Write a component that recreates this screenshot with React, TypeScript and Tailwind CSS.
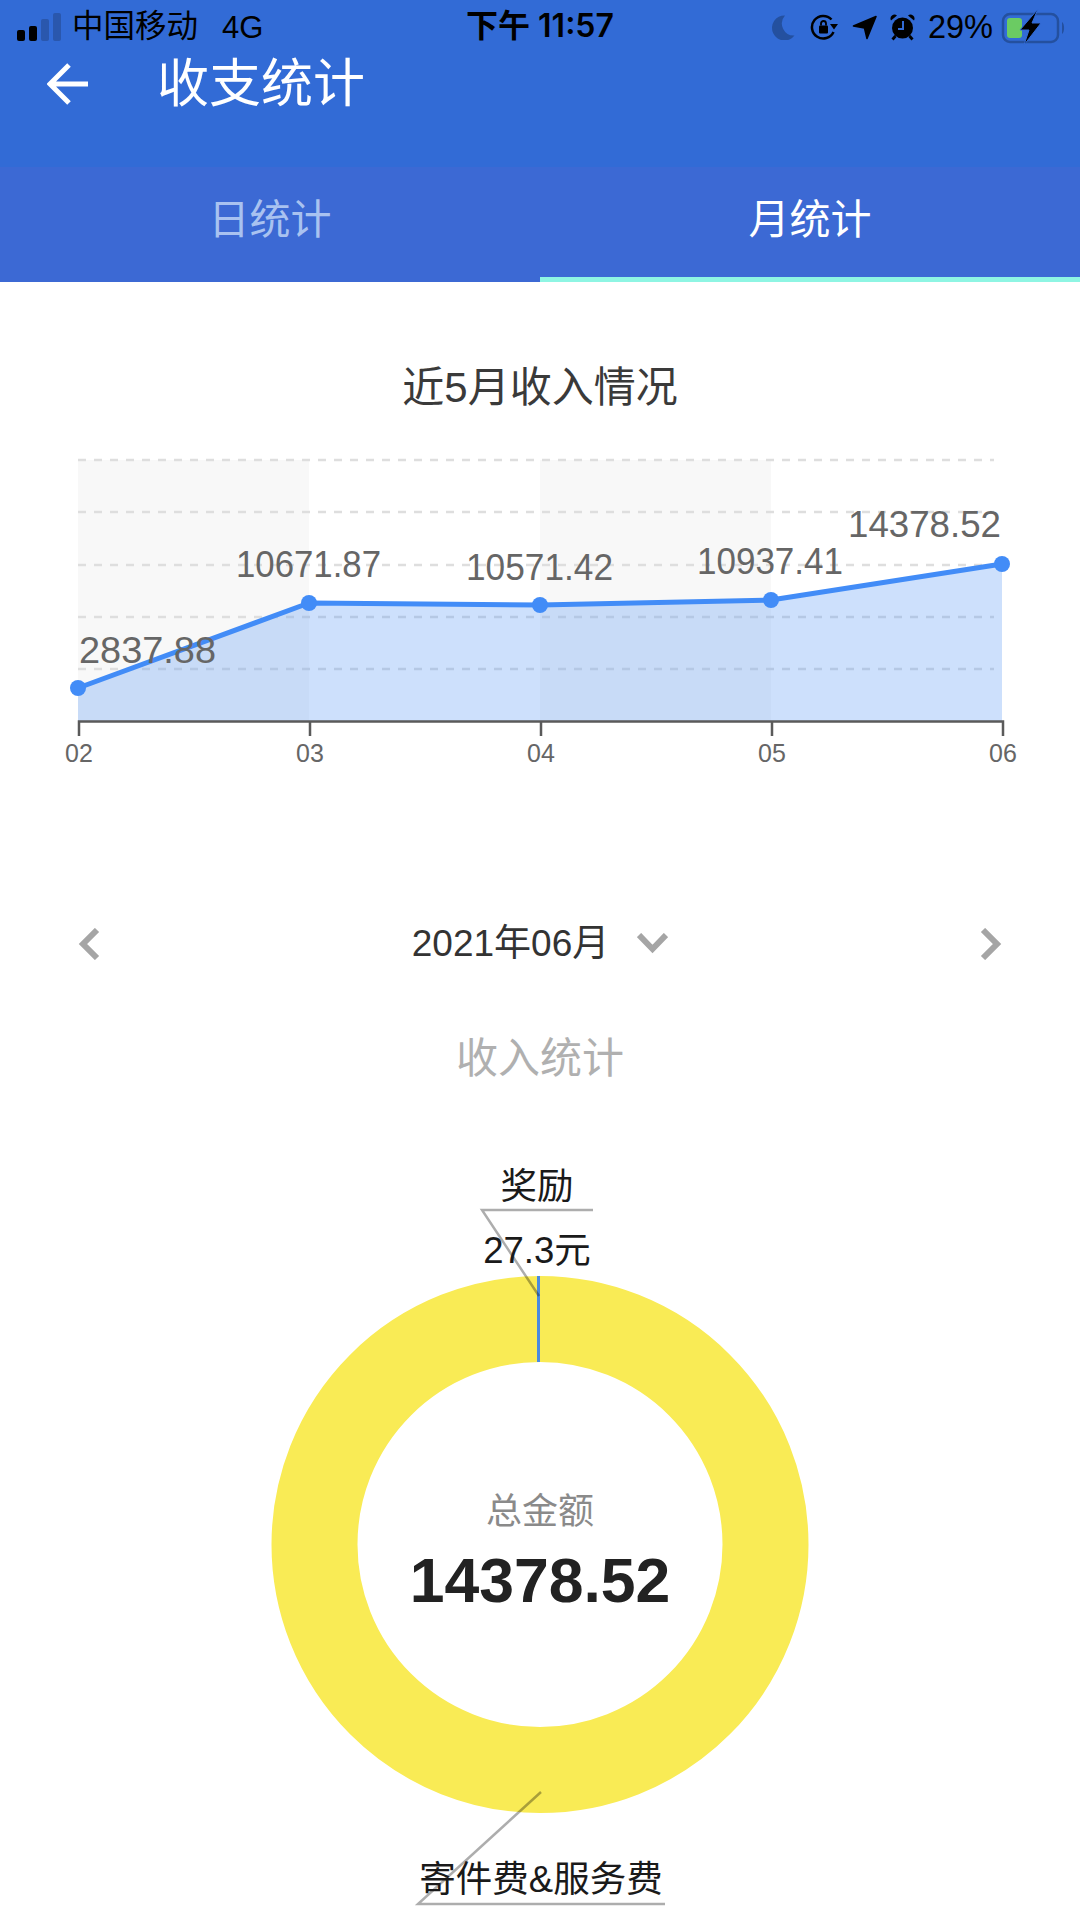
const FONT = "font-['Liberation_Sans','Noto_Sans_CJK_SC',sans-serif]";
const SVG_FONT = "'Liberation Sans','Noto Sans CJK SC',sans-serif";

const pts: [number, number][] = [[78, 248], [309, 163], [540, 165], [771, 160], [1002, 124]];
const ys = [20, 72, 125, 177, 229];
const values: { t: string; x: number; y: number; w: number }[] = [
  { t: "2837.88", x: 79, y: 223, w: 137 },
  { t: "10671.87", x: 236, y: 137, w: 145 },
  { t: "10571.42", x: 466, y: 140, w: 147 },
  { t: "10937.41", x: 697, y: 134, w: 146 },
  { t: "14378.52", x: 848, y: 97, w: 153 },
];

function LineChart() {
  const line = pts.map((p) => p.join(",")).join(" ");
  return (
    <svg width="1080" height="340" viewBox="0 0 1080 340" className="block" style={{ fontFamily: SVG_FONT }}>
      <rect x="78" y="20" width="231" height="261" fill="#f8f8f8" />
      <rect x="540" y="20" width="231" height="261" fill="#f8f8f8" />
      {ys.map((y) => (
        <line key={y} x1="78" x2="994" y1={y} y2={y} stroke="#dedede" strokeWidth="2.5" strokeDasharray="8 8" />
      ))}
      <polygon points={`78,281 ${line} 1002,281`} fill="#4a90f5" fillOpacity="0.28" />
      <polyline points={line} fill="none" stroke="#428cf7" strokeWidth="5" strokeLinejoin="round" />
      {pts.map((p) => (
        <circle key={p[0]} cx={p[0]} cy={p[1]} r="8" fill="#428cf7" />
      ))}
      <path d="M79 296V281.5H1003V296M310 281.5V296M541 281.5V296M772 281.5V296" fill="none" stroke="#5a5a5a" strokeWidth="2.5" />
      {values.map((v) => (
        <text key={v.t} x={v.x} y={v.y} fontSize="36" fill="#666666" textLength={v.w} lengthAdjust="spacingAndGlyphs">
          {v.t}
        </text>
      ))}
      {["02", "03", "04", "05", "06"].map((t, i) => (
        <text key={t} x={79 + i * 231} y="322" fontSize="25" fill="#666666" textAnchor="middle">
          {t}
        </text>
      ))}
    </svg>
  );
}

function Donut() {
  // svg origin sits at page y=1140
  const cx = 540, cy = 404.5, R = 225.5;
  return (
    <svg width="1080" height="780" viewBox="0 0 1080 780" className="block" style={{ fontFamily: SVG_FONT }}>
      <circle cx={cx} cy={cy} r={R} fill="none" stroke="#f9eb55" strokeWidth="86" />
      <rect x="537" y="136" width="3" height="86" fill="#4a8ae0" />
      <text x="537" y="59" fontSize="36.5" fill="#1a1a1a" textAnchor="middle">奖励</text>
      <path d="M539 156L482 70H593" fill="none" stroke="#000000" strokeOpacity="0.32" strokeWidth="2.5" />
      <text x="537" y="123" fontSize="36.5" fill="#1a1a1a" textAnchor="middle">27.3元</text>
      <path d="M541 652L418 764H665" fill="none" stroke="#000000" strokeOpacity="0.32" strokeWidth="2.5" />
      <text x="541" y="752" fontSize="36.5" fill="#1a1a1a" textAnchor="middle">寄件费&amp;服务费</text>
    </svg>
  );
}

function StatusIcons() {
  return (
    <div className="flex items-center">
      <svg width="25" height="26" viewBox="0 0 25 26">
        <path d="M15 1.5a12.5 12.5 0 1 0 9.5 20A12 12 0 0 1 15 1.5Z" fill="#24509f" />
      </svg>
      <svg width="28" height="28" viewBox="0 0 28 28" className="ml-[15px]">
        <path d="M21.5 6.5A11.3 11.3 0 1 0 23.5 19" fill="none" stroke="#000" strokeWidth="2.5" />
        <path d="M20 11h8l-4 5.5Z" fill="#000" />
        <rect x="9" y="12.5" width="9" height="8" rx="1" fill="#000" />
        <path d="M11 12.5V10.5a2.5 2.5 0 0 1 5 0v2" fill="none" stroke="#000" strokeWidth="1.8" />
      </svg>
      <svg width="25" height="25" viewBox="0 0 25 25" className="ml-[14px]">
        <path d="M24 1.5L15 23.5l-2.5-10.5L1.5 11Z" fill="#000" stroke="#000" strokeWidth="1.6" strokeLinejoin="round" />
      </svg>
      <svg width="25" height="28" viewBox="0 0 25 28" className="ml-[13px]">
        <circle cx="12.5" cy="15" r="10.5" fill="#000" />
        <path d="M1 7.5a4 4 0 0 1 6-5ZM24 7.5a4 4 0 0 0-6-5Z" fill="#000" />
        <path d="M5.5 23l-3 3.5M19.5 23l3 3.5" stroke="#000" strokeWidth="2.8" />
        <path d="M13 8v8H8" fill="none" stroke="#326bd6" strokeWidth="2" />
      </svg>
      <span className="ml-[13px] text-[32.5px] leading-none text-black">29%</span>
      <svg width="65" height="36" viewBox="0 0 65 36" className="ml-[8px]">
        <rect x="2" y="5" width="55" height="28" rx="7" fill="none" stroke="#24509f" strokeWidth="2.5" />
        <rect x="6" y="9" width="15" height="20" rx="3" fill="#6bcb63" />
        <path d="M61 13c2.5 1 3 10 0 12Z" fill="#24509f" />
        <path d="M37 0L19 21h9l-5 15 17-22h-9l6-14Z" fill="#000" stroke="#326bd6" strokeWidth="1" />
      </svg>
    </div>
  );
}

export default function App() {
  return (
    <div className={`w-[1080px] h-[1920px] overflow-hidden bg-white ${FONT}`}>
      <header className="h-[167px] bg-[#326bd6]">
        <div className="relative flex h-[54px] items-center justify-between pl-[17px] pr-[14px] text-black">
          <div className="flex items-center">
            <div className="flex h-[28px] items-end gap-[4px]">
              <span className="h-[11px] w-[8px] rounded-[2px] bg-black" />
              <span className="h-[15px] w-[8px] rounded-[2px] bg-black" />
              <span className="h-[22px] w-[8px] rounded-[2px] bg-[#2a57ad]" />
              <span className="h-[28px] w-[8px] rounded-[2px] bg-[#2a57ad]" />
            </div>
            <span className="ml-[11px] text-[31.5px] leading-none">中国移动</span>
            <span className="ml-[24px] text-[31px] leading-none">4G</span>
          </div>
          <span className="absolute left-[466px] top-[9px] font-['Inter','Noto_Sans_CJK_SC',sans-serif] text-[32px] font-semibold leading-[34px]">下午 11:57</span>
          <StatusIcons />
        </div>
        <div className="flex h-[60px] items-center pl-[47px]">
          <svg width="42" height="44" viewBox="0 0 42 44" fill="none" stroke="#ffffff" strokeWidth="5">
            <path d="M22 3L3 22l19 19M3 22h38" />
          </svg>
          <span className="ml-[68px] text-[52px] leading-none text-white">收支统计</span>
        </div>
      </header>
      <nav className="grid h-[115px] grid-cols-2 bg-[#3c69d4] text-[41px]">
        <div className="flex items-center justify-center pb-[7px] text-[#a9c2f0]">日统计</div>
        <div className="flex items-center justify-center border-b-[5px] border-[#8ef5e3] pb-[2px] text-white">月统计</div>
      </nav>

      <h2 className="mt-[76px] h-[60px] text-center text-[42px] font-normal leading-[60px] text-[#3a3a3a]">近5月收入情况</h2>
      <div className="mt-[22px]">
        <LineChart />
      </div>

      <div className="mt-[135px] flex h-[60px] items-center justify-between px-[78px]">
        <svg width="22" height="32" viewBox="0 0 22 32" fill="none" stroke="#a5a5a5" strokeWidth="6" className="-translate-y-[1px]">
          <path d="M19 2L5 16l14 14" />
        </svg>
        <div className="flex items-center gap-[28px]">
          <span className="-translate-y-[2px] text-[37px] leading-none text-[#333333]">2021年06月</span>
          <svg width="31" height="21" viewBox="0 0 31 21" fill="none" stroke="#a5a5a5" strokeWidth="6" className="-translate-y-[2px]">
            <path d="M2 2l13.5 14L29 2" />
          </svg>
        </div>
        <svg width="22" height="32" viewBox="0 0 22 32" fill="none" stroke="#a5a5a5" strokeWidth="6" className="-translate-y-[1px]">
          <path d="M3 2l14 14L3 30" />
        </svg>
      </div>

      <h3 className="mt-[54px] h-[60px] text-center text-[42px] font-normal leading-[60px] text-[#b0b0b0]">收入统计</h3>

      <div className="relative mt-[51px]">
        <Donut />
        <div className="absolute left-0 top-[352px] flex w-full flex-col items-center">
          <span className="text-[36px] leading-[40px] text-[#8a8a8a]">总金额</span>
          <span className="mt-[13px] text-[62.5px] font-bold leading-[70px] text-[#222222]">14378.52</span>
        </div>
      </div>
    </div>
  );
}
